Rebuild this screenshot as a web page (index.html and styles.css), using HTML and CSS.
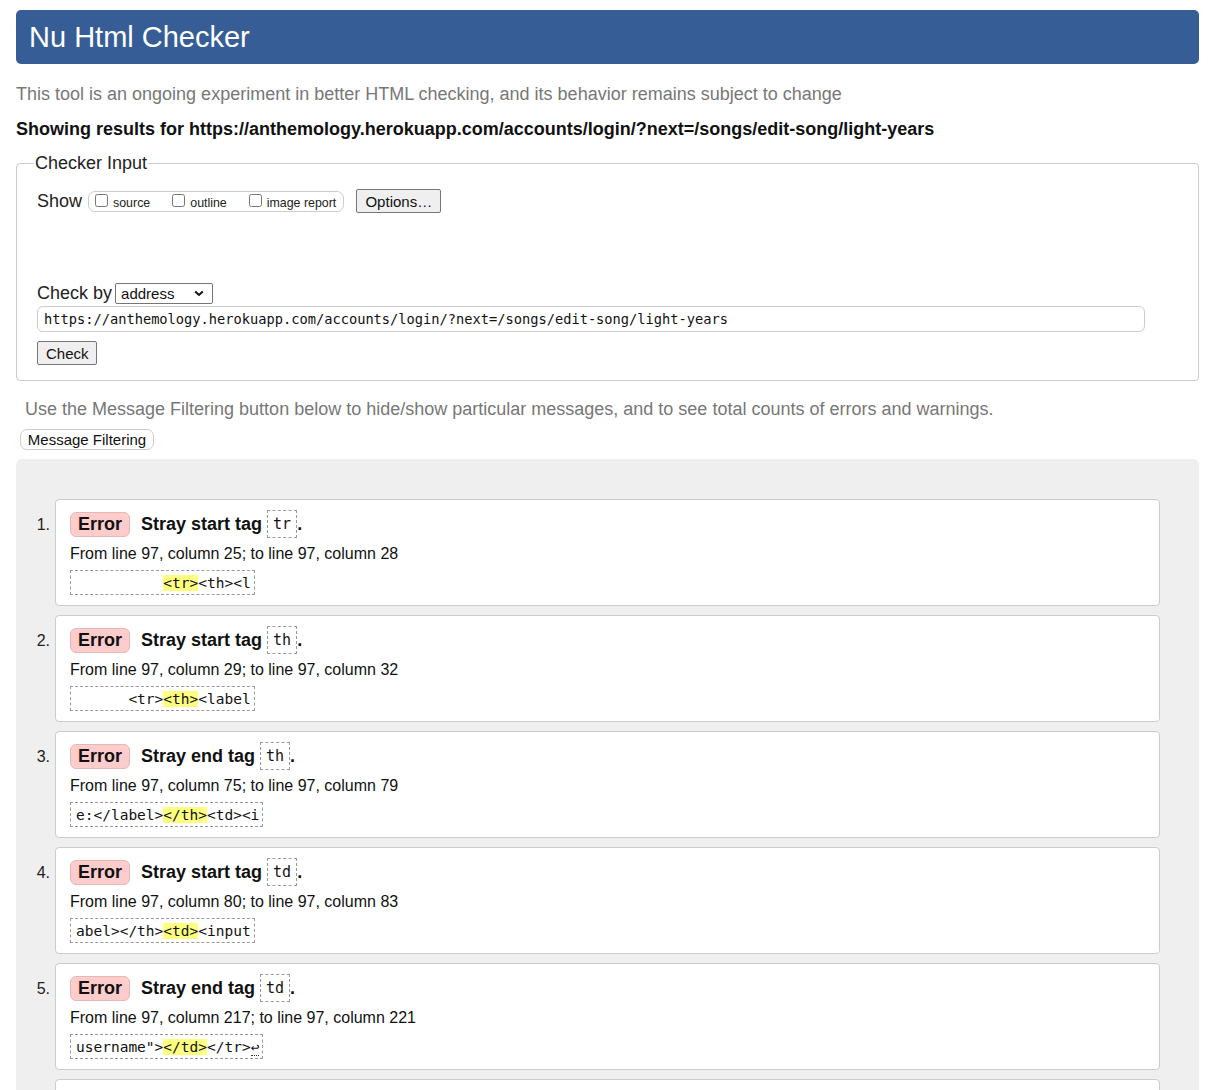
FILE: index.html
```
<!DOCTYPE html>
<html lang="en">
<head>
<meta charset="utf-8">
<title>Showing results for https://anthemology.herokuapp.com/accounts/login/?next=/songs/edit-song/light-years - Nu Html Checker</title>
<link rel="stylesheet" href="styles.css">
</head>
<body>
<h1 class="title">Nu Html Checker</h1>
<p class="intro">This tool is an ongoing experiment in better HTML checking, and its behavior remains subject to change</p>
<p class="showing">Showing results for https://anthemology.herokuapp.com/accounts/login/?next=/songs/edit-song/light-years</p>
<form class="checker">
  <fieldset class="fs">
    <legend class="legend">Checker Input</legend>
    <div class="show-row">
      <span class="row-label">Show</span>
      <span class="cb-group">
        <label class="cb"><input type="checkbox" class="cb-input">source</label>
        <label class="cb"><input type="checkbox" class="cb-input">outline</label>
        <label class="cb"><input type="checkbox" class="cb-input">image report</label>
      </span>
      <button type="button" class="btn btn-options">Options…</button>
    </div>
    <div class="spacer"></div>
    <div class="checkby-row">
      <span class="row-label">Check by</span>
      <span class="sel-wrap">
        <select class="sel"><option>address</option></select>
        <svg class="chev" width="10" height="7" viewBox="0 0 10 7" aria-hidden="true"><path d="M1.2 1.5 L5 5 L8.8 1.5" fill="none" stroke="#111" stroke-width="2"/></svg>
      </span>
    </div>
    <input class="url" type="text" value="https://anthemology.herokuapp.com/accounts/login/?next=/songs/edit-song/light-years">
    <div class="check-row"><button type="button" class="btn btn-check">Check</button></div>
  </fieldset>
</form>
<p class="filter-note">Use the Message Filtering button below to hide/show particular messages, and to see total counts of errors and warnings.</p>
<button type="button" class="btn-filter">Message Filtering</button>
<div class="results">
  <ol class="msgs">
    <li class="msg">
      <span class="num">1.</span>
      <div class="card">
        <div class="msg-title"><span class="badge">Error</span><span class="msg-text">Stray start tag <code class="tag">tr</code>.</span></div>
        <p class="loc">From line 97, column 25; to line 97, column 28</p>
        <div class="extract"><code class="ext-code">          <mark class="hl">&lt;tr&gt;</mark>&lt;th&gt;&lt;l</code></div>
      </div>
    </li>
    <li class="msg">
      <span class="num">2.</span>
      <div class="card">
        <div class="msg-title"><span class="badge">Error</span><span class="msg-text">Stray start tag <code class="tag">th</code>.</span></div>
        <p class="loc">From line 97, column 29; to line 97, column 32</p>
        <div class="extract"><code class="ext-code">      &lt;tr&gt;<mark class="hl">&lt;th&gt;</mark>&lt;label</code></div>
      </div>
    </li>
    <li class="msg">
      <span class="num">3.</span>
      <div class="card">
        <div class="msg-title"><span class="badge">Error</span><span class="msg-text">Stray end tag <code class="tag">th</code>.</span></div>
        <p class="loc">From line 97, column 75; to line 97, column 79</p>
        <div class="extract"><code class="ext-code">e:&lt;/label&gt;<mark class="hl">&lt;/th&gt;</mark>&lt;td&gt;&lt;i</code></div>
      </div>
    </li>
    <li class="msg">
      <span class="num">4.</span>
      <div class="card">
        <div class="msg-title"><span class="badge">Error</span><span class="msg-text">Stray start tag <code class="tag">td</code>.</span></div>
        <p class="loc">From line 97, column 80; to line 97, column 83</p>
        <div class="extract"><code class="ext-code">abel&gt;&lt;/th&gt;<mark class="hl">&lt;td&gt;</mark>&lt;input</code></div>
      </div>
    </li>
    <li class="msg">
      <span class="num">5.</span>
      <div class="card">
        <div class="msg-title"><span class="badge">Error</span><span class="msg-text">Stray end tag <code class="tag">td</code>.</span></div>
        <p class="loc">From line 97, column 217; to line 97, column 221</p>
        <div class="extract"><code class="ext-code">username"&gt;<mark class="hl">&lt;/td&gt;</mark>&lt;/tr&gt;<span class="lf">↩</span></code></div>
      </div>
    </li>
    <li class="msg">
      <span class="num">6.</span>
      <div class="card">
        <div class="msg-title"><span class="badge">Error</span><span class="msg-text">Stray end tag <code class="tag">tr</code>.</span></div>
        <p class="loc">From line 97, column 222; to line 97, column 226</p>
        <div class="extract"><code class="ext-code">ame"&gt;&lt;/td&gt;<mark class="hl">&lt;/tr&gt;</mark>↩</code></div>
      </div>
    </li>
  </ol>
</div>
</body>
</html>
```
FILE: styles.css
```
html, body {
  margin: 0;
  padding: 0;
}
body {
  padding: 10px 9px 0 16px;
  font-family: "Liberation Sans", Arial, sans-serif;
  color: #111;
  background: #fff;
}
.title {
  margin: 0;
  height: 54px;
  line-height: 54px;
  padding-left: 13px;
  background: #365d95;
  color: #fff;
  font-size: 29px;
  font-weight: normal;
  border-radius: 5px;
}
.intro {
  margin: 19px 0 0 0;
  font-size: 18px;
  line-height: 22px;
  color: #777;
}
.showing {
  margin: 13px 0 0 0;
  font-size: 18px;
  line-height: 22px;
  font-weight: bold;
  color: #111;
}
.checker {
  margin: 12px 0 0 0;
}
.fs {
  margin: 0;
  padding: 0 20px 15px 20px;
  border: 1px solid #ccc;
  border-radius: 4px;
}
.legend {
  font-size: 18px;
  line-height: 22px;
  padding: 0 1px;
  margin-left: -3px;
  color: #222;
}
.show-row {
  margin-top: 15px;
  height: 24px;
  display: flex;
  align-items: center;
}
.row-label {
  font-size: 18px;
  color: #222;
}
.cb-group {
  margin-left: 6px;
  height: 19px;
  display: flex;
  align-items: center;
  gap: 22px;
  padding: 0 7px 0 6px;
  border: 1px solid #ccc;
  border-radius: 7px;
}
.cb {
  display: flex;
  align-items: center;
  font-size: 12.4px;
  color: #222;
  padding-top: 3px;
}
.cb-input {
  width: 13px;
  height: 13px;
  margin: -5px 5px 0 0;
}
.btn {
  font-family: "Liberation Sans", Arial, sans-serif;
  font-size: 15px;
  color: #111;
  background: #efefef;
  border: 1px solid #767676;
  border-radius: 2px;
  height: 24px;
  padding: 0 8px;
}
.btn-options {
  margin-left: 12px;
  width: 85px;
}
.spacer {
  height: 69px;
}
.checkby-row {
  height: 23px;
  display: flex;
  align-items: center;
}
.sel-wrap {
  position: relative;
  margin-left: 3px;
  display: flex;
}
.sel {
  appearance: none;
  -webkit-appearance: none;
  width: 98px;
  height: 21px;
  font-family: "Liberation Sans", Arial, sans-serif;
  font-size: 15px;
  color: #111;
  border: 1px solid #767676;
  border-radius: 2px;
  background: #fff;
  padding: 0 0 0 5px;
  margin: 0;
}
.chev {
  position: absolute;
  right: 9px;
  top: 7px;
  pointer-events: none;
}
.url {
  display: block;
  box-sizing: border-box;
  margin-top: 1px;
  width: 1108px;
  height: 26px;
  padding: 0 6px;
  border: 1px solid #ccc;
  border-radius: 6px;
  font-family: "DejaVu Sans Mono", "Liberation Mono", monospace;
  font-size: 13.7px;
  color: #111;
}
.check-row {
  margin-top: 9px;
  display: flex;
}
.btn-check {
  width: 60px;
  font-size: 15px;
}
.filter-note {
  margin: 17px 0 0 9px;
  font-size: 18px;
  line-height: 22px;
  color: #777;
}
.btn-filter {
  display: block;
  margin: 9px 0 0 4px;
  height: 21px;
  width: 134px;
  padding: 0;
  font-family: "Liberation Sans", Arial, sans-serif;
  font-size: 15px;
  color: #111;
  background: #fff;
  border: 1px solid #ccc;
  border-radius: 7px;
}
.results {
  margin-top: 9px;
  background: #efefef;
  border-radius: 6px;
  padding: 40px 39px 20px 0;
}
.msgs {
  list-style: none;
  margin: 0;
  padding: 0;
  display: flex;
  flex-direction: column;
  gap: 9px;
}
.msg {
  display: flex;
}
.num {
  flex: 0 0 39px;
  box-sizing: border-box;
  padding: 12px 5px 0 0;
  text-align: right;
  font-size: 16px;
  line-height: 28px;
  color: #222;
}
.card {
  flex: 1;
  background: #fff;
  border: 1px solid #ccc;
  border-radius: 4px;
  padding: 10px 14px 10px 14px;
}
.msg-title {
  height: 28px;
  display: flex;
  align-items: center;
}
.badge {
  box-sizing: border-box;
  height: 25px;
  line-height: 23px;
  padding: 0 7px;
  background: #ffcccc;
  border: 1px solid #e5b8b8;
  border-radius: 6px;
  font-size: 18px;
  font-weight: bold;
  color: #111;
}
.msg-text {
  margin-left: 11px;
  font-size: 18px;
  font-weight: bold;
  color: #111;
  display: flex;
  align-items: center;
  white-space: pre;
}
.tag {
  box-sizing: border-box;
  height: 28px;
  line-height: 26px;
  padding: 0 5px;
  border: 1px dashed #999;
  font-family: "DejaVu Sans Mono", "Liberation Mono", monospace;
  font-size: 15px;
  font-weight: normal;
  color: #111;
}
.loc {
  margin: 6px 0 0 0;
  font-size: 16px;
  line-height: 20px;
  color: #111;
}
.extract {
  margin-top: 6px;
  display: flex;
}
.ext-code {
  box-sizing: border-box;
  height: 25px;
  padding: 3px 3px 0 5px;
  border: 1px dashed #999;
  font-family: "DejaVu Sans Mono", "Liberation Mono", monospace;
  font-size: 14.5px;
  line-height: 18px;
  white-space: pre;
  color: #111;
}
.hl {
  background: #ffff80;
  color: #111;
}
.lf {
  border-bottom: 1px dotted #333;
}
```
